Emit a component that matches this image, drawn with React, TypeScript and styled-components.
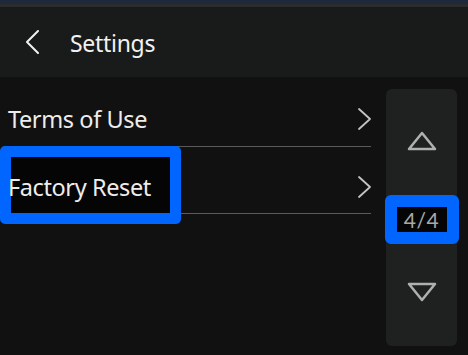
import React from "react";
import styled, { createGlobalStyle } from "styled-components";

const Global = createGlobalStyle`
  html, body { margin: 0; padding: 0; background: #111111; }
  body { font-family: "Noto Sans", "Liberation Sans", sans-serif; }
  * { box-sizing: border-box; }
`;

const Screen = styled.div`
  width: 468px;
  height: 355px;
  display: flex;
  flex-direction: column;
  background: #111111;
  overflow: hidden;
`;

const StatusStrip = styled.div`
  height: 7px;
  flex: none;
  background: linear-gradient(#1e2a3b 0, #1e2a3b 4px, #2a2c2d 4px, #2a2c2d 7px);
`;

const Header = styled.div`
  height: 70px;
  flex: none;
  display: flex;
  align-items: center;
  padding-left: 26px;
  background: #191b1a;
`;

const Title = styled.div`
  margin-left: 31px;
  color: #f2f2f2;
  font-size: 23px;
  letter-spacing: -0.3px;
  line-height: 1;
  padding-top: 2px;
`;

const Main = styled.div`
  flex: 1;
  display: flex;
  padding: 2px 11px 9px 8px;
  gap: 15px;
`;

const List = styled.div`
  width: 363px;
  display: flex;
  flex-direction: column;
`;

const Row = styled.div`
  position: relative;
  height: 67.5px;
  display: flex;
  align-items: center;
  justify-content: space-between;
  padding-top: 14px;
  border-bottom: 1.5px solid #5a5a5a;
`;

const Label = styled.span`
  position: relative;
  z-index: 1;
  color: #ededed;
  font-size: 23.5px;
  letter-spacing: -0.4px;
  line-height: 1.2;
`;

const FocusRing = styled.div`
  position: absolute;
  left: -8px;
  top: -1px;
  width: 181px;
  height: 78px;
  border: 11px solid #0066ff;
  border-radius: 5px;
  background: #050505;
`;

const Chevron = styled.svg`
  position: relative;
  z-index: 1;
  margin-right: -1px;
`;

const Pager = styled.div`
  margin-top: 10px;
  width: 71px;
  height: 257px;
  display: flex;
  flex-direction: column;
  align-items: center;
  background: #1e211f;
  border-radius: 6px;
  padding-top: 41px;
`;

const Arrow = styled.svg<{ $gap?: number }>`
  display: block;
  flex: none;
  margin-top: ${(p) => p.$gap ?? 0}px;
`;

const Indicator = styled.div`
  width: 74px;
  height: 49px;
  flex: none;
  margin-top: 43px;
  border: 12px solid #0066ff;
  border-radius: 6px;
  background: #050505;
  display: flex;
  align-items: center;
  justify-content: center;
  color: #a9a9a9;
  font-family: "Lato", "Noto Sans", sans-serif;
  font-size: 21px;
  letter-spacing: 0.5px;
  line-height: 1;
`;

const RowChevron = () => (
  <Chevron width="15" height="24" viewBox="0 0 15 24">
    <polyline points="2,2 13,12 2,22" fill="none" stroke="#c4c4c4" strokeWidth="1.8" strokeLinecap="round" strokeLinejoin="round" />
  </Chevron>
);

const rows = [
  { label: "Terms of Use", focused: false },
  { label: "Factory Reset", focused: true },
];

export default function App() {
  return (
    <Screen>
      <Global />
      <StatusStrip />
      <Header>
        <svg width="13" height="24" viewBox="0 0 13 24">
          <polyline points="12,1 1,12 12,23" fill="none" stroke="#f0f0f0" strokeWidth="2" strokeLinecap="round" strokeLinejoin="round" />
        </svg>
        <Title>Settings</Title>
      </Header>
      <Main>
        <List>
          {rows.map((r) => (
            <Row key={r.label}>
              {r.focused && <FocusRing />}
              <Label>{r.label}</Label>
              <RowChevron />
            </Row>
          ))}
        </List>
        <Pager>
          <Arrow width="32" height="22" viewBox="0 0 32 22">
            <polygon points="3,19 29,19 16,3" fill="none" stroke="#b0b0b0" strokeWidth="2.5" strokeLinejoin="round" />
          </Arrow>
          <Indicator>4/4</Indicator>
          <Arrow $gap={37} width="32" height="22" viewBox="0 0 32 22">
            <polygon points="3,3 29,3 16,19" fill="none" stroke="#b0b0b0" strokeWidth="2.5" strokeLinejoin="round" />
          </Arrow>
        </Pager>
      </Main>
    </Screen>
  );
}
